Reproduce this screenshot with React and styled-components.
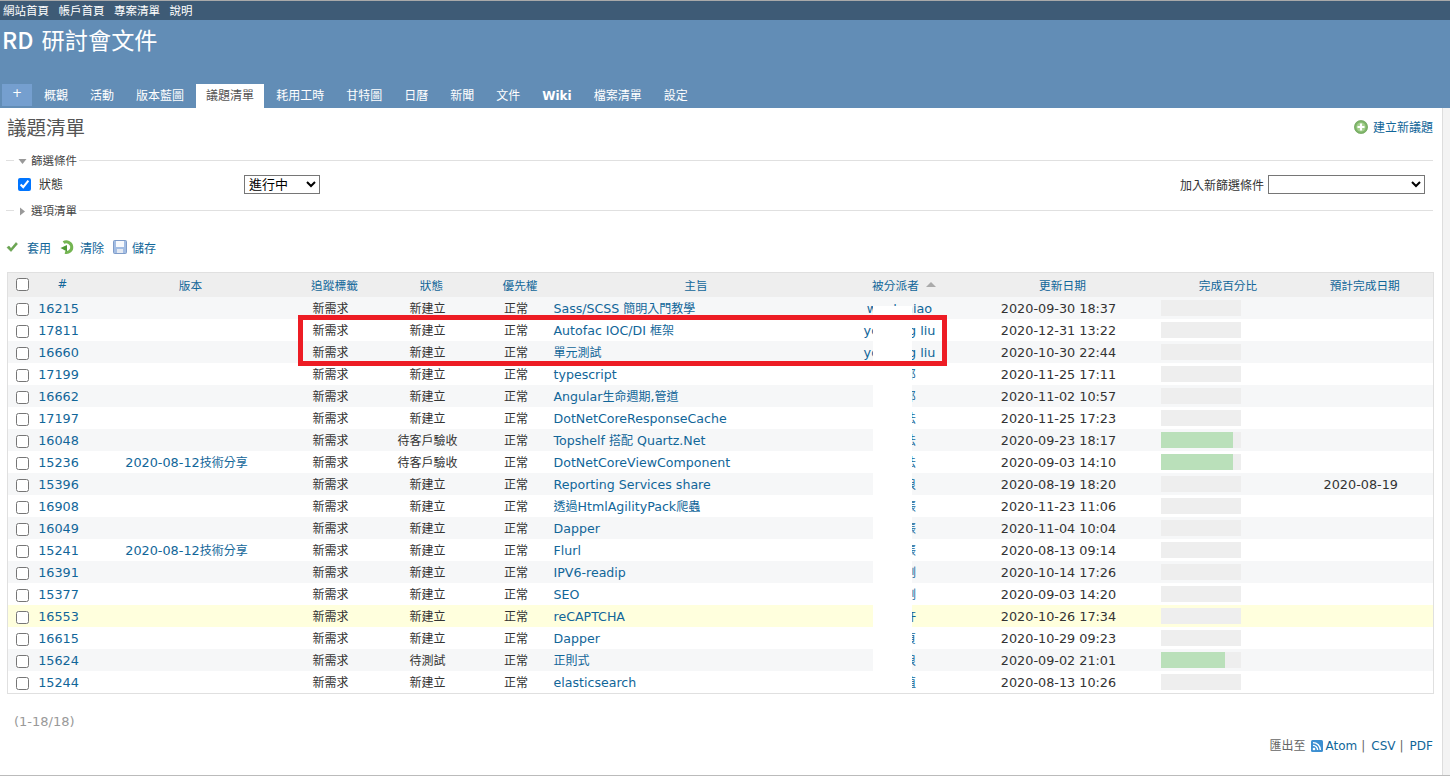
import React from 'react';
import styled, { createGlobalStyle } from 'styled-components';

const GlobalStyle = createGlobalStyle`
  html, body {
    margin: 0;
    padding: 0;
    background: #fff;
    overflow: hidden;
  }
  body {
    font-family: "DejaVu Sans", "Noto Sans CJK TC", sans-serif;
    font-size: 12px;
    color: #333;
  }
  a {
    color: #169;
    text-decoration: none;
  }
`;

const Page = styled.div`
  width: 1450px;
  height: 781px;
  display: flex;
  flex-direction: column;
  overflow: hidden;
`;

const TopMenu = styled.div`
  height: 20px;
  border-top: 1px solid #a9a9a9;
  background: #3e5b76;
  display: flex;
  align-items: center;
  gap: 9.5px;
  padding: 0 0 1px 3px;
  box-sizing: border-box;
  flex: none;
  a {
    color: #fff;
    font-size: 11.5px;
  }
`;

const Header = styled.div`
  height: 88px;
  flex: none;
  background: #628db6;
  display: flex;
  flex-direction: column;
  justify-content: space-between;
  color: #fff;
`;

const Title = styled.h1`
  margin: 4px 0 0 2px;
  font-family: "Noto Sans CJK TC", sans-serif;
  font-size: 23.2px;
  line-height: 30px;
  font-weight: 400;
  b {
    font-weight: 500;
    margin-right: 3px;
  }
`;

const Tabs = styled.div`
  display: flex;
  gap: 2px;
  padding-left: 2px;
  height: 24px;
`;

const Tab = styled.a`
  display: flex;
  align-items: center;
  justify-content: center;
  box-sizing: border-box;
  padding: 0 10px ${(p) => (p.$bold ? '0' : '4px')};
  height: ${(p) => (p.$plus ? '22px' : '24px')};
  font-size: 12px;
  color: ${(p) => (p.$active ? '#555' : '#fff')};
  background: ${(p) => (p.$active ? '#fff' : p.$plus ? '#759fcf' : 'transparent')};
  font-weight: ${(p) => (p.$bold ? 700 : 400)};
  min-width: ${(p) => (p.$plus ? '30px' : 'auto')};
`;

const Body = styled.div`
  flex: none;
  height: 668px;
  box-sizing: border-box;
  display: flex;
  background: #f3f3f3;
  border-bottom: 1px solid #bbb;
`;

const Main = styled.div`
  width: 1443px;
  box-sizing: border-box;
  background: #fff;
  border-right: 1px solid #ddd;
  padding: 0 9px 0 6px;
`;

const TitleRow = styled.div`
  height: 35px;
  padding-bottom: 5px;
  padding-top: 1px;
  display: flex;
  justify-content: space-between;
  align-items: center;
`;

const PageTitle = styled.h2`
  margin: 0 0 0 1px;
  font-size: 19.5px;
  font-weight: 400;
  color: #555;
`;

const CreateLink = styled.a`
  display: flex;
  align-items: center;
  gap: 5px;
`;

const Filter = styled.fieldset`
  margin: ${(p) => p.$top} 0 0;
  padding: 0;
  border: none;
  border-top: 1px solid #e0e0e0;
  min-width: 0;
`;

const Legend = styled.legend`
  display: flex;
  align-items: center;
  gap: 4px;
  margin-left: 8px;
  padding: 2px 2px 0 4px;
  font-size: 11.5px;
  color: #444;
  line-height: 14px;
`;

const FilterRow = styled.div`
  display: flex;
  align-items: center;
  height: 19px;
  margin-top: 7px;
  padding: 0 8px 0 12px;
`;

const StatusCheck = styled.input`
  width: 13px;
  height: 13px;
  margin: 0 8px 0 0;
`;

const FieldLabel = styled.label`
  width: 205px;
  margin-bottom: 2px;
`;

const Select = styled.select`
  width: ${(p) => p.$w};
  height: 19px;
  padding: 0;
  font-family: "Liberation Sans", "Noto Sans CJK TC", sans-serif;
  font-size: 13px;
  background: #fff;
  color: #000;
`;

const AddFilter = styled.div`
  margin-left: auto;
  display: flex;
  align-items: center;
  gap: 4px;
`;

const Actions = styled.div`
  display: flex;
  align-items: center;
  height: 16px;
  margin-top: 21px;
`;

const ActionLink = styled.a`
  display: flex;
  align-items: center;
  gap: ${(p) => p.$gap};
  margin-right: 9px;
`;

const TableWrap = styled.div`
  position: relative;
  margin: 17px 0 0 1px;
  width: 1426px;
`;

const Table = styled.table`
  width: 1426px;
  table-layout: fixed;
  border-collapse: collapse;
  border: 1px solid #e0e0e0;
`;

const HeadCell = styled.th`
  box-sizing: border-box;
  height: 24px;
  padding: 0 ${(p) => p.$right || '0'} 1px 0;
  background: #eee;
  font-size: 11.7px;
  font-weight: 400;
  text-align: center;
  a {
    padding-left: 8px;
  }
`;

const Row = styled.tr`
  height: 22px;
  background: ${(p) => p.$bg};
`;

const Cell = styled.td`
  box-sizing: border-box;
  padding: 2px 0 0;
  height: 22px;
  text-align: center;
  white-space: nowrap;
  overflow: hidden;
  line-height: 20px;
`;

const Latin = styled.span`
  font-size: 12.8px;
`;

const SubjectCell = styled(Cell)`
  text-align: left;
  padding-left: 8px;
  ${Latin} {
    font-size: 12.6px;
  }
`;

const DueCell = styled(Cell)`
  padding-right: 3px;
`;

const SortHead = styled.a`
  padding-left: 0 !important;
  display: inline-flex;
  align-items: center;
  gap: 7px;
  margin-left: 9px;
`;

const SortArrow = styled.span`
  width: 0;
  height: 0;
  border-left: 5px solid transparent;
  border-right: 5px solid transparent;
  border-bottom: 5px solid #aaa;
`;

const CheckCell = styled(Cell)`
  padding: 0;
`;

const RowCheck = styled.input`
  display: block;
  width: 13px;
  height: 13px;
  margin: 3px 0 0 8px;
`;

const HeadCheck = styled(RowCheck)`
  margin-top: 1px;
`;

const BarCell = styled(Cell)`
  padding: 0 0 0 4px;
`;

const Bar = styled.div`
  width: 80px;
  height: 16px;
  background: #eee;
`;

const BarFill = styled.div`
  height: 100%;
  background: #bae0ba;
`;

const Mask = styled.div`
  position: absolute;
  left: 866px;
  top: 34px;
  width: 39px;
  height: 386px;
  background: #fff;
`;

const RedBox = styled.div`
  position: absolute;
  left: 291px;
  top: 43px;
  width: 639px;
  height: 41px;
  border: 5px solid #ed1c24;
`;

const Pagination = styled.p`
  margin: 20px 0 0 8px;
  color: #999;
  font-size: 13px;
  line-height: 16px;
`;

const Export = styled.p`
  margin: 8px 0 0;
  display: flex;
  justify-content: flex-end;
  align-items: center;
  color: #666;
  line-height: 16px;
  svg {
    margin: 0 3px 0 5px;
  }
  span {
    margin: 0 6px 0 4px;
  }
`;

const ISSUES = [
  ['16215', '', '新建立', 'Sass/SCSS 簡明入門教學', 'wanluniao', '2020-09-30 18:37', 0, ''],
  ['17811', '', '新建立', 'Autofac IOC/DI 框架', 'yo-ming liu', '2020-12-31 13:22', 0, ''],
  ['16660', '', '新建立', '單元測試', 'yo-ming liu', '2020-10-30 22:44', 0, ''],
  ['17199', '', '新建立', 'typescript', '○○郎', '2020-11-25 17:11', 0, ''],
  ['16662', '', '新建立', 'Angular生命週期,管道', '○○郎', '2020-11-02 10:57', 0, ''],
  ['17197', '', '新建立', 'DotNetCoreResponseCache', '○○法', '2020-11-25 17:23', 0, ''],
  ['16048', '', '待客戶驗收', 'Topshelf 搭配 Quartz.Net', '○○法', '2020-09-23 18:17', 90, ''],
  ['15236', '2020-08-12技術分享', '待客戶驗收', 'DotNetCoreViewComponent', '○○法', '2020-09-03 14:10', 90, ''],
  ['15396', '', '新建立', 'Reporting Services share', '○○浪', '2020-08-19 18:20', 0, '2020-08-19'],
  ['16908', '', '新建立', '透過HtmlAgilityPack爬蟲', '○○張', '2020-11-23 11:06', 0, ''],
  ['16049', '', '新建立', 'Dapper', '○○張', '2020-11-04 10:04', 0, ''],
  ['15241', '2020-08-12技術分享', '新建立', 'Flurl', '○○張', '2020-08-13 09:14', 0, ''],
  ['16391', '', '新建立', 'IPV6-readip', '○○剛', '2020-10-14 17:26', 0, ''],
  ['15377', '', '新建立', 'SEO', '○○剛', '2020-09-03 14:20', 0, ''],
  ['16553', '', '新建立', 'reCAPTCHA', '○○許', '2020-10-26 17:34', 0, ''],
  ['16615', '', '新建立', 'Dapper', '○○貞', '2020-10-29 09:23', 0, ''],
  ['15624', '', '待測試', '正則式', '○○浪', '2020-09-02 21:01', 80, ''],
  ['15244', '', '新建立', 'elasticsearch', '○○值', '2020-08-13 10:26', 0, ''],
];

const TABS = ['概觀', '活動', '版本藍圖', '議題清單', '耗用工時', '甘特圖', '日曆', '新聞', '文件', 'Wiki', '檔案清單', '設定'];

const COLS = [29, 44, 212, 76, 118, 59, 293, 122, 196, 135, 142];

// latin runs are a bit larger than the CJK ones, as in the original page
function Mixed({ text }) {
  return text.split(/([\u0020-\u007e]+)/).map((part, i) =>
    /[\u0020-\u007e]/.test(part) ? <Latin key={i}>{part}</Latin> : part
  );
}

function rowColor(i, id) {
  if (id === '16553') return '#ffd';
  return i % 2 === 0 ? '#f6f7f8' : '#fff';
}

const CheckIcon = () => (
  <svg width="12" height="12" viewBox="0 0 12 12">
    <path d="M1 6.5 L3 5 L5 7.5 L10 1.5 L11.5 3 L5 10.5 Z" fill="#6aa84f" stroke="#5b8f45" strokeWidth="0.5" />
  </svg>
);

const ReloadIcon = () => (
  <svg width="14" height="16" viewBox="0 0 14 16">
    <path d="M3.5 3.6 A5.4 5.4 0 1 1 5 13.4" fill="none" stroke="#74b552" strokeWidth="3" />
    <path d="M0.5 9 L7 6 L7 12.5 Z" fill="#4f9a35" />
  </svg>
);

const SaveIcon = () => (
  <svg width="14" height="14" viewBox="0 0 14 14">
    <rect x="0.5" y="0.5" width="13" height="13" rx="1" fill="#a3bde3" stroke="#7f9cc9" />
    <rect x="3" y="1" width="8" height="6" fill="#f7f9fc" />
    <rect x="4" y="9" width="6" height="4" fill="#e4e9f1" />
  </svg>
);

const AddIcon = () => (
  <svg width="14" height="14" viewBox="0 0 14 14">
    <circle cx="7" cy="7" r="6.6" fill="#7fb56a" stroke="#5f9a4c" strokeWidth="0.6" />
    <circle cx="7" cy="7" r="4.6" fill="#a4d08e" />
    <path d="M7 3.5 V10.5 M3.5 7 H10.5" stroke="#fff" strokeWidth="2.2" />
  </svg>
);

const FeedIcon = () => (
  <svg width="12" height="12" viewBox="0 0 12 12">
    <rect width="12" height="12" rx="1.5" fill="#3d8fd1" />
    <circle cx="3" cy="9" r="1.3" fill="#fff" />
    <path d="M2 5.4 A4.6 4.6 0 0 1 6.6 10 M2 2.6 A7.4 7.4 0 0 1 9.4 10" fill="none" stroke="#fff" strokeWidth="1.4" />
  </svg>
);

const Triangle = ({ open }) => (
  <svg width="9" height="9" viewBox="0 0 9 9">
    <path d={open ? 'M0.5 2 H8.5 L4.5 7 Z' : 'M2 0.5 V8.5 L7 4.5 Z'} fill="#999" />
  </svg>
);

export default function App() {
  return (
    <Page>
      <GlobalStyle />
      <TopMenu>
        <a href="#">網站首頁</a>
        <a href="#">帳戶首頁</a>
        <a href="#">專案清單</a>
        <a href="#">說明</a>
      </TopMenu>
      <Header>
        <Title>
          <b>RD</b> 研討會文件
        </Title>
        <Tabs>
          <Tab $plus href="#">+</Tab>
          {TABS.map((t) => (
            <Tab key={t} href="#" $active={t === '議題清單'} $bold={t === 'Wiki'}>
              {t}
            </Tab>
          ))}
        </Tabs>
      </Header>
      <Body>
        <Main>
          <TitleRow>
            <PageTitle>議題清單</PageTitle>
            <CreateLink href="#">
              <AddIcon />
              建立新議題
            </CreateLink>
          </TitleRow>
          <Filter $top="3px">
            <Legend>
              <Triangle open />
              篩選條件
            </Legend>
            <FilterRow>
              <StatusCheck type="checkbox" defaultChecked />
              <FieldLabel>狀態</FieldLabel>
              <Select $w="76px" defaultValue="open">
                <option value="open">進行中</option>
              </Select>
              <AddFilter>
                加入新篩選條件
                <Select $w="157px" />
              </AddFilter>
            </FilterRow>
          </Filter>
          <Filter $top="8px">
            <Legend>
              <Triangle />
              選項清單
            </Legend>
          </Filter>
          <Actions>
            <ActionLink href="#" $gap="9px"><CheckIcon />套用</ActionLink>
            <ActionLink href="#" $gap="6px"><ReloadIcon />清除</ActionLink>
            <ActionLink href="#" $gap="5px"><SaveIcon />儲存</ActionLink>
          </Actions>
          <TableWrap>
            <Table>
              <colgroup>
                {COLS.map((w, i) => (
                  <col key={i} width={w} />
                ))}
              </colgroup>
              <thead>
                <tr>
                  <HeadCell><HeadCheck type="checkbox" /></HeadCell>
                  <HeadCell><a href="#">#</a></HeadCell>
                  <HeadCell><a href="#">版本</a></HeadCell>
                  <HeadCell><a href="#">追蹤標籤</a></HeadCell>
                  <HeadCell><a href="#">狀態</a></HeadCell>
                  <HeadCell><a href="#">優先權</a></HeadCell>
                  <HeadCell><a href="#">主旨</a></HeadCell>
                  <HeadCell>
                    <SortHead href="#">被分派者<SortArrow /></SortHead>
                  </HeadCell>
                  <HeadCell><a href="#">更新日期</a></HeadCell>
                  <HeadCell><a href="#">完成百分比</a></HeadCell>
                  <HeadCell $right="3px"><a href="#">預計完成日期</a></HeadCell>
                </tr>
              </thead>
              <tbody>
                {ISSUES.map(([id, version, status, subject, assignee, updated, done, due], i) => (
                  <Row key={id} $bg={rowColor(i, id)}>
                    <CheckCell><RowCheck type="checkbox" /></CheckCell>
                    <Cell><a href="#"><Latin>{id}</Latin></a></Cell>
                    <Cell><a href="#"><Mixed text={version} /></a></Cell>
                    <Cell>新需求</Cell>
                    <Cell>{status}</Cell>
                    <Cell>正常</Cell>
                    <SubjectCell><a href="#"><Mixed text={subject} /></a></SubjectCell>
                    <Cell><a href="#"><Mixed text={assignee} /></a></Cell>
                    <Cell><Latin>{updated}</Latin></Cell>
                    <BarCell>
                      <Bar>
                        {done > 0 && <BarFill style={{ width: `${done}%` }} />}
                      </Bar>
                    </BarCell>
                    <DueCell><Latin>{due}</Latin></DueCell>
                  </Row>
                ))}
              </tbody>
            </Table>
            <Mask />
            <RedBox />
          </TableWrap>
          <Pagination>(1-18/18)</Pagination>
          <Export>
            匯出至
            <FeedIcon />
            <a href="#">Atom</a>
            <span>|</span>
            <a href="#">CSV</a>
            <span>|</span>
            <a href="#">PDF</a>
          </Export>
        </Main>
      </Body>
    </Page>
  );
}
